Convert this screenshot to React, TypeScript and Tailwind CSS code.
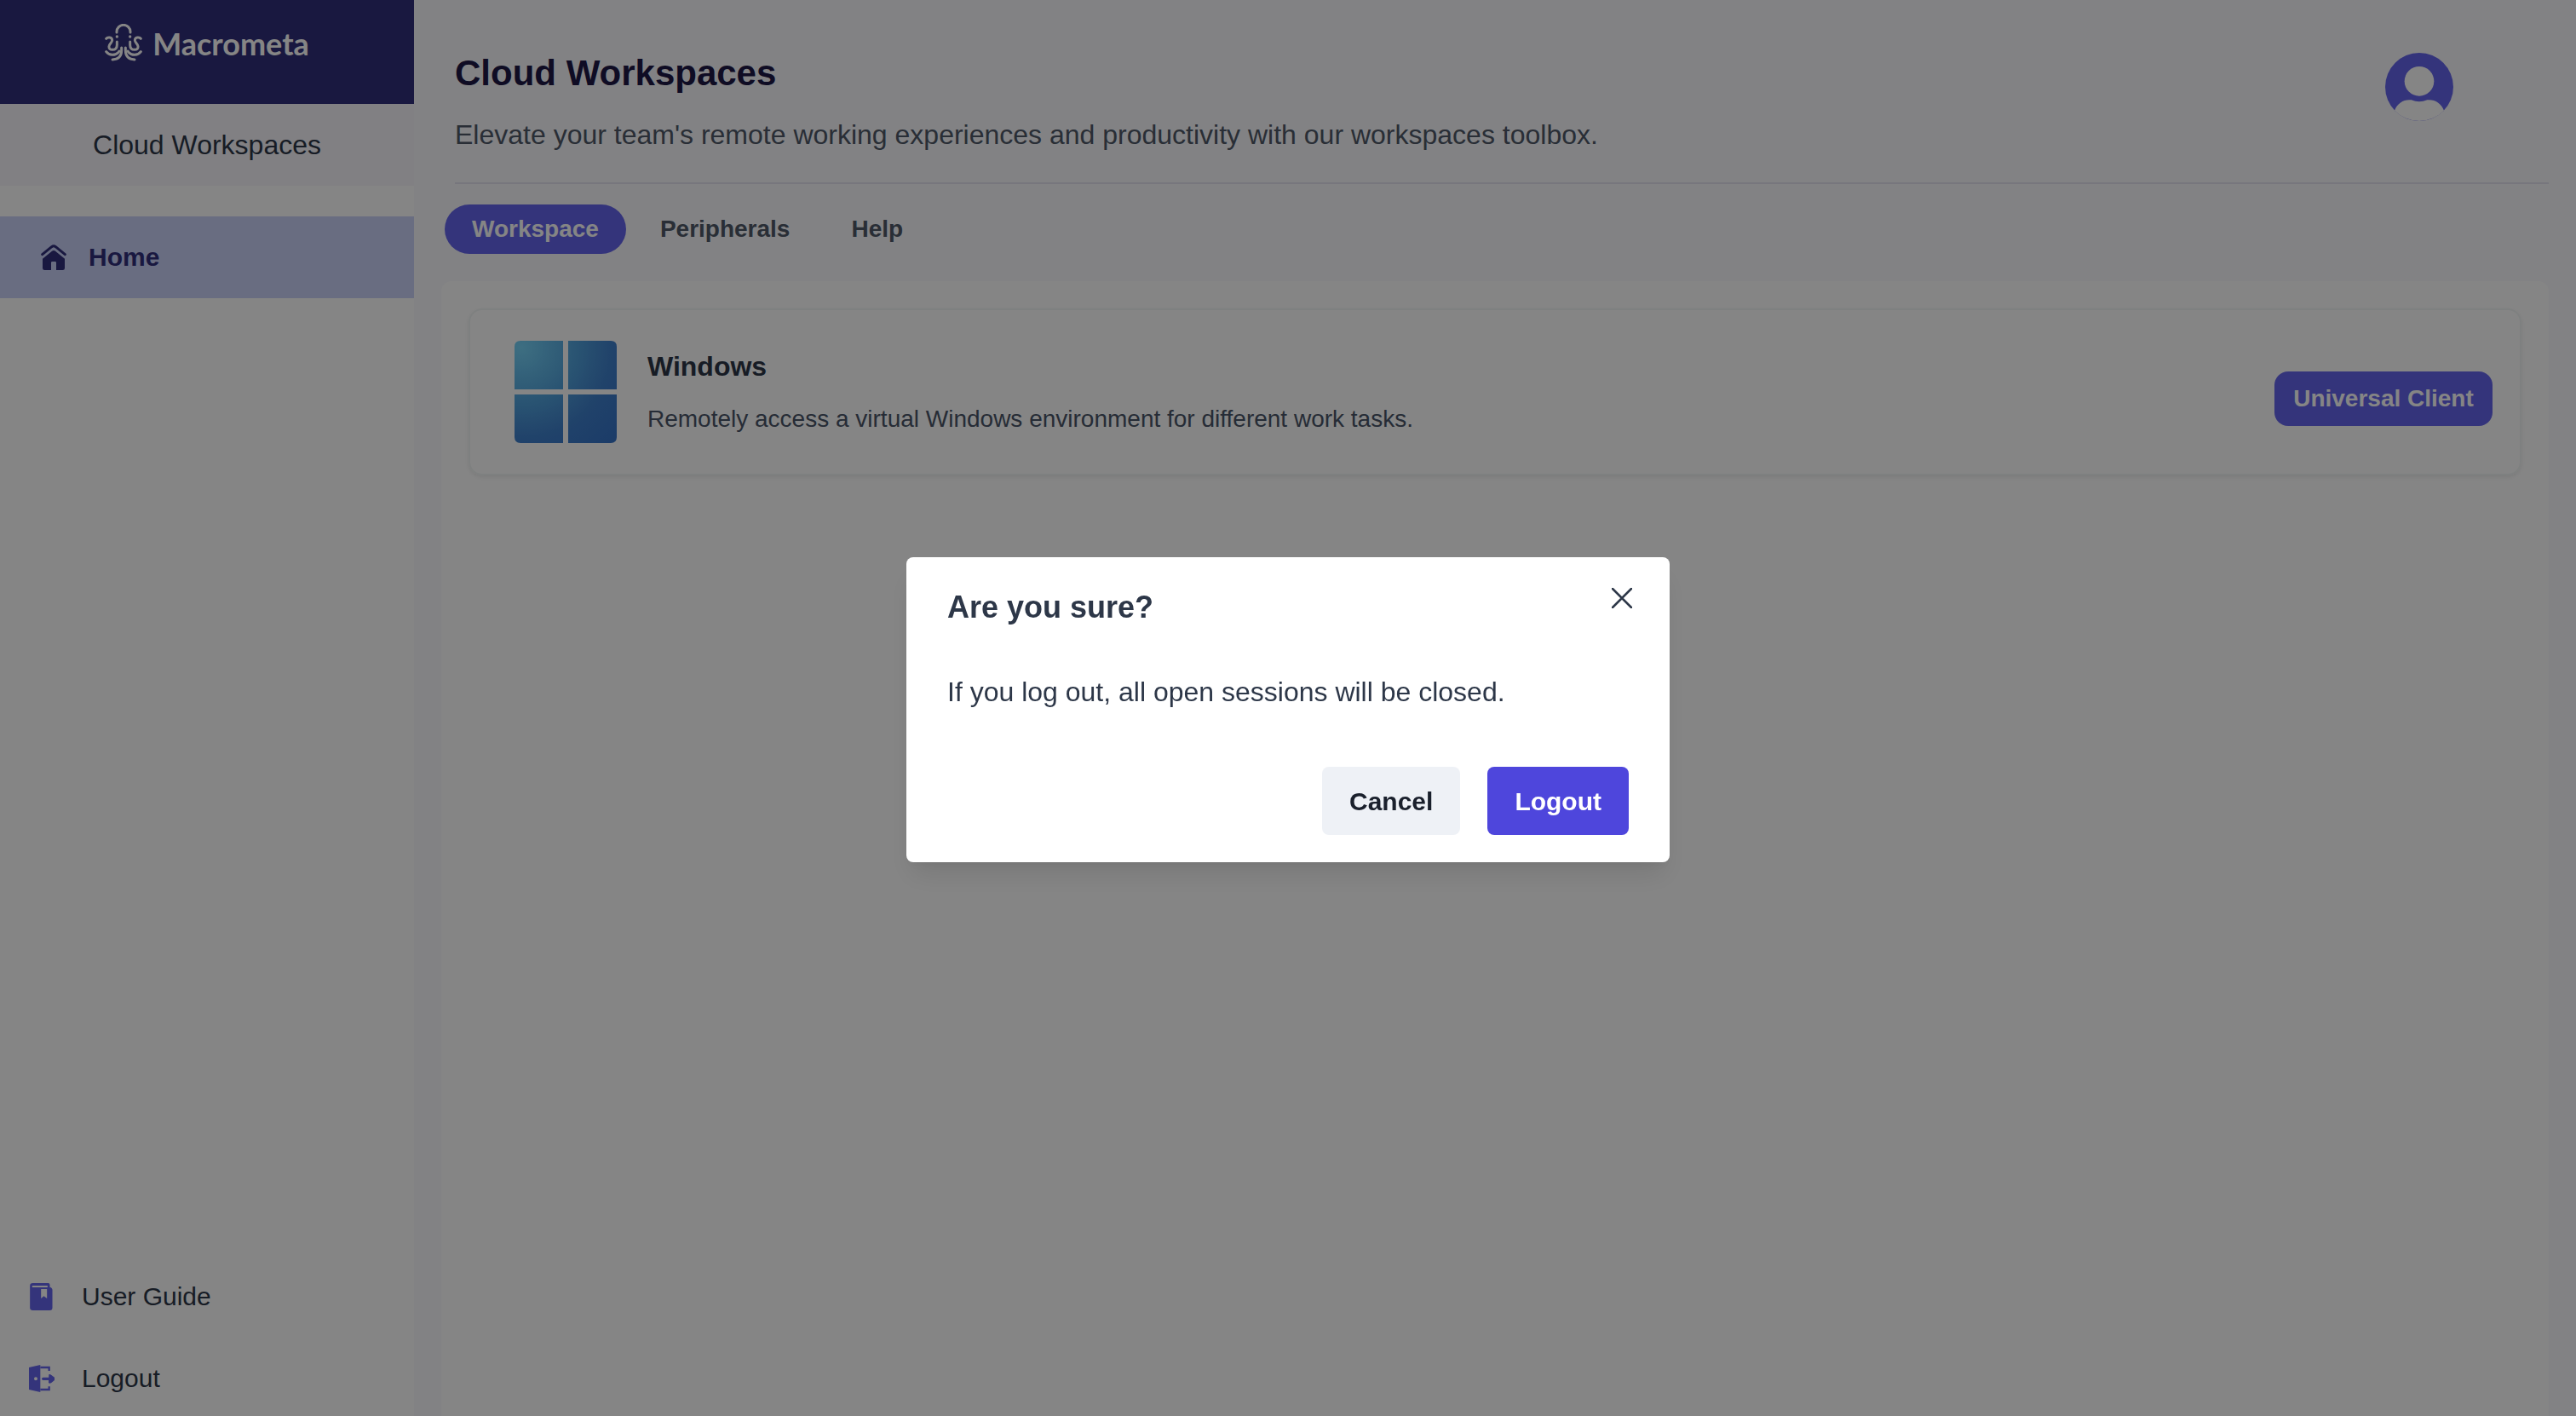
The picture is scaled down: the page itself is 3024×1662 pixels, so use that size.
import { useState } from "react";

function OctopusMark() {
  const half = (
    <>
      <circle cx="42" cy="45" r="5" fill="currentColor" stroke="none" />
      <path d="M4 52C8 46 25 45 25 58C25 66 15 70 14 79C13 88 18 91 26 91C38 91 42 84 42 74V63" />
      <path d="M4 98C14 112 36 112 46 101L50 96" />
      <path d="M58 84V94C58 114 46 125 26 126" />
    </>
  );
  return (
    <svg viewBox="0 0 130 132" className="h-11 w-11" fill="none" stroke="currentColor" strokeWidth="9" strokeLinecap="round" aria-hidden="true">
      <path d="M41 30V28a24 24 0 0 1 48 0v2" />
      <g>{half}</g>
      <g transform="translate(130 0) scale(-1 1)">{half}</g>
    </svg>
  );
}

function HomeIcon() {
  return (
    <svg viewBox="0 0 90 90" className="h-[30px] w-[30px]" aria-hidden="true">
      <path d="M5 35L38 8Q45 3 52 8L85 35" fill="none" stroke="currentColor" strokeWidth="9" strokeLinecap="round" strokeLinejoin="round" />
      <path d="M6 50L39 23Q45 19 51 23L84 50V83Q84 90 77 90H54V64Q54 60 50 60H40Q36 60 36 64V90H13Q6 90 6 83Z" fill="currentColor" />
    </svg>
  );
}

function BookIcon() {
  return (
    <svg viewBox="0 0 80 96" className="h-8 w-[27px]" aria-hidden="true">
      <path
        fill="currentColor"
        fillRule="evenodd"
        d="M10 0H64Q70 0 70 6V14Q79 16 79 24V87Q79 96 70 96H10Q0 96 0 87V10Q0 0 10 0ZM8 9V15H62V9ZM39 21V54L49 46L60 54V21Z"
      />
    </svg>
  );
}

function DoorIcon() {
  return (
    <svg viewBox="0 0 90 96" className="h-8 w-[30px]" aria-hidden="true">
      <path fill="currentColor" fillRule="evenodd" d="M0 9L40 0V96L0 87ZM24 43a6 6 0 1 0 0 12a6 6 0 1 0 0-12Z" />
      <path d="M40 9H71V21M40 87H71V76" fill="none" stroke="currentColor" strokeWidth="7" />
      <path d="M50 49H74" stroke="currentColor" strokeWidth="10" strokeLinecap="round" />
      <path d="M70 34Q73 31 79 36L90 44V54L79 63Q72 68 69 63Z" fill="currentColor" />
    </svg>
  );
}

function AvatarIcon() {
  return (
    <svg viewBox="0 0 240 240" className="h-20 w-20" aria-hidden="true">
      <circle cx="120" cy="120" r="120" fill="#6565eb" />
      <circle cx="120" cy="100" r="52" fill="#fff" />
      <path d="M33 203C44 176 66 163 92 166Q120 178 148 166C174 163 196 176 207 203A121 121 0 0 1 33 203Z" fill="#fff" />
    </svg>
  );
}

function WindowsLogo() {
  return (
    <svg viewBox="0 0 120 120" className="h-[120px] w-[120px]" aria-hidden="true">
      <defs>
        <radialGradient id="win" gradientUnits="userSpaceOnUse" cx="8" cy="8" r="150">
          <stop offset="0" stopColor="#76d4f8" />
          <stop offset="0.45" stopColor="#4f9fda" />
          <stop offset="0.7" stopColor="#3f80cc" />
          <stop offset="1" stopColor="#3674c8" />
        </radialGradient>
      </defs>
      <g fill="url(#win)">
        <path d="M7 0H57V57H0V7Q0 0 7 0Z" />
        <path d="M63 0H113Q120 0 120 7V57H63Z" />
        <path d="M0 63H57V120H7Q0 120 0 113Z" />
        <path d="M63 63H120V113Q120 120 113 120H63Z" />
      </g>
    </svg>
  );
}

const tabs = ["Workspace", "Peripherals", "Help"];

export default function App() {
  const [tab, setTab] = useState("Workspace");
  const [open, setOpen] = useState(true);
  return (
    <div className="flex min-h-screen bg-[#fafafd] font-['Liberation_Sans',Arial,sans-serif]">
      <aside className="flex w-[486px] shrink-0 flex-col bg-white text-[30px] leading-9 text-[#2d3748]">
        <div className="flex h-[122px] items-start justify-center gap-3 bg-[#312e7c] pt-7 text-white">
          <OctopusMark />
          <span className="font-['Lato',sans-serif] text-[36px] leading-[46px] font-bold">Macrometa</span>
        </div>
        <div className="flex h-24 items-center justify-center bg-[#f7f6fb] text-[32px]">Cloud Workspaces</div>
        <nav className="mt-9">
          <a href="#home" className="flex h-24 items-center bg-[#cad2f7] pl-12 font-bold text-[#312e7c]">
            <span className="flex w-14"><HomeIcon /></span>
            Home
          </a>
        </nav>
        <nav className="mt-auto">
          <a href="#guide" className="flex h-24 items-center pt-2 pl-8">
            <span className="flex w-16 pl-[3px] text-[#6565eb]"><BookIcon /></span>
            User Guide
          </a>
          <a href="#logout" onClick={() => setOpen(true)} className="flex h-24 items-center pt-2 pl-8">
            <span className="flex w-16 pl-[2px] text-[#6565eb]"><DoorIcon /></span>
            Logout
          </a>
        </nav>
      </aside>

      <main className="flex flex-1 flex-col pr-8 pl-8">
        <header className="ml-4 flex h-[216px] justify-between border-b-2 border-[#e4e3f0] pt-[62px] pr-28">
          <div>
            <h1 className="text-[42px] leading-[48px] font-bold text-[#1e1745]">Cloud Workspaces</h1>
            <p className="mt-7 text-[32px] leading-10 text-[#4f5868]">
              Elevate your team's remote working experiences and productivity with our workspaces toolbox.
            </p>
          </div>
          <button type="button" aria-label="Account" className="h-20 w-20 rounded-full">
            <AvatarIcon />
          </button>
        </header>
        <div className="mt-6 ml-1 flex gap-2">
          {tabs.map((name) => (
            <button
              key={name}
              type="button"
              onClick={() => setTab(name)}
              className={`h-[58px] rounded-full px-8 text-[28px] leading-8 font-bold ${tab === name ? "bg-[#6565eb] text-white" : "text-[#4f5868]"}`}
            >
              {name}
            </button>
          ))}
        </div>
        <section className="mt-8 flex-1 rounded-t-xl bg-white p-8">
          <article className="flex h-[196px] items-center rounded-2xl border-2 border-[#f2f6f5] pr-8 pl-[52px] shadow-[0_2px_4px_rgba(0,0,0,0.08)]">
            <WindowsLogo />
            <div className="ml-9 flex-1">
              <h2 className="text-[32px] leading-10 font-bold text-[#2d3748]">Windows</h2>
              <p className="mt-6 text-[28px] leading-9 text-[#4a5568]">
                Remotely access a virtual Windows environment for different work tasks.
              </p>
            </div>
            <button type="button" className="mt-4 h-16 w-64 rounded-2xl bg-[#6565eb] text-[28px] font-bold text-white">
              Universal Client
            </button>
          </article>
        </section>
      </main>

      {open && (
        <div className="fixed inset-0 flex items-start justify-center bg-black/48 pt-[654px]">
          <div
            role="dialog"
            aria-modal="true"
            aria-labelledby="dialog-title"
            className="relative w-[896px] rounded-lg bg-white px-12 pt-8 pb-8 text-[#2d3748] shadow-[0_20px_30px_-6px_rgba(0,0,0,0.1),0_8px_12px_-4px_rgba(0,0,0,0.04)]"
          >
            <h2 id="dialog-title" className="text-[36px] leading-[54px] font-bold">Are you sure?</h2>
            <button type="button" aria-label="Close" onClick={() => setOpen(false)} className="absolute top-6 right-8 flex h-12 w-12 items-center justify-center">
              <svg viewBox="0 0 24 24" className="h-6 w-6" stroke="currentColor" strokeWidth="2.5" strokeLinecap="round" aria-hidden="true">
                <path d="M1 1L23 23M23 1L1 23" />
              </svg>
            </button>
            <p className="mt-12 text-[32px] leading-[48px]">If you log out, all open sessions will be closed.</p>
            <div className="mt-16 flex justify-end gap-8 text-[30px] font-bold">
              <button type="button" onClick={() => setOpen(false)} className="h-20 rounded-lg bg-[#eef1f6] px-8 text-[#1a202c]">Cancel</button>
              <button type="button" onClick={() => setOpen(false)} className="h-20 rounded-lg bg-[#4e46dc] px-8 text-white">Logout</button>
            </div>
          </div>
        </div>
      )}
    </div>
  );
}
